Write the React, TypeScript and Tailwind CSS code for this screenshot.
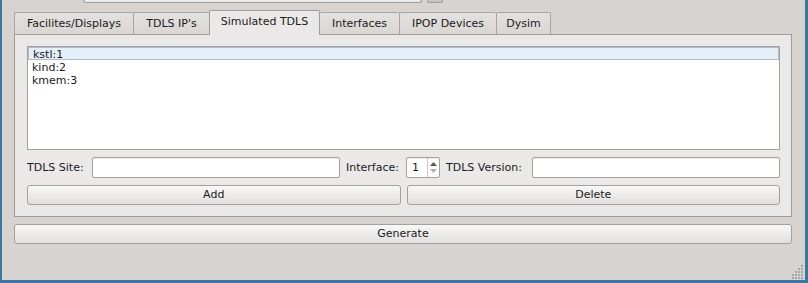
import clsx from "clsx";

const tabs = [
  { label: "Facilites/Displays", w: "w-[119px]" },
  { label: "TDLS IP's", w: "w-[76px]" },
  { label: "Simulated TDLS", w: "w-[111px]" },
  { label: "Interfaces", w: "w-[79px]" },
  { label: "IPOP Devices", w: "w-[97px]" },
  { label: "Dysim", w: "w-[55px]" },
];

const selected = 2;
const rows = ["kstl:1", "kind:2", "kmem:3"];

const TabBar = () => (
  <div className="flex items-end h-[24px] ml-[12px]">
    {tabs.map((t, i) => {
      const isSel = i === selected;
      return (
        <div
          key={t.label}
          className={clsx(
            "flex items-center justify-center rounded-t-[2px] border-[#a8a5a2] border-t whitespace-nowrap",
            t.w,
            isSel
              ? "relative z-10 h-[25px] -mb-px pb-[2px] border-l border-r bg-[#ebe9e8] border-[#a09d9a]"
              : "h-[22px] pt-[2px] bg-linear-to-b from-[#e3e1df] to-[#d9d6d4]",
            !isSel && i !== selected + 1 && "border-l",
            i === tabs.length - 1 && "border-r"
          )}
        >
          {t.label}
        </div>
      );
    })}
  </div>
);

const Field = ({ className }: { className?: string }) => (
  <div
    className={clsx(
      "h-[21px] bg-white border border-[#a3a09d] rounded-[2px] shadow-[inset_0_1px_1px_rgba(0,0,0,0.08)]",
      className
    )}
  />
);

const Button = ({ label, className }: { label: string; className?: string }) => (
  <div
    className={clsx(
      "h-[20px] pt-px flex items-center justify-center border border-[#a3a09d] rounded-[3px] bg-linear-to-b from-[#f8f8f7] to-[#e2e0de]",
      className
    )}
  >
    {label}
  </div>
);

const SpinBox = () => (
  <div className="w-[34px] h-[21px] flex bg-white border border-[#a3a09d] rounded-[2px] shadow-[inset_0_1px_1px_rgba(0,0,0,0.08)]">
    <div className="flex-1 flex items-center pl-[5px] pt-px">1</div>
    <div className="w-[12px] border-l border-[#c9c6c3] flex flex-col items-center justify-center gap-[3px]">
      <svg width="7" height="4" viewBox="0 0 7 4">
        <polygon points="0,4 3.5,0 7,4" fill="#5a5856" />
      </svg>
      <svg width="7" height="4" viewBox="0 0 7 4">
        <polygon points="0,0 7,0 3.5,4" fill="#b3b0ad" />
      </svg>
    </div>
  </div>
);

const SizeGrip = () => (
  <svg width="12" height="14" viewBox="0 0 12 14" className="self-end mr-[1px] mb-[1px]">
    {[
      [9, 0],
      [6, 3], [9, 3],
      [3, 6], [6, 6], [9, 6],
      [0, 9], [3, 9], [6, 9], [9, 9],
      [0, 12], [3, 12], [6, 12], [9, 12],
    ].map(([x, y]) => (
      <rect key={`${x}-${y}`} x={x} y={y} width="2" height="2" fill="#a9a6a3" />
    ))}
  </svg>
);

export default function App() {
  return (
    <div className="w-[808px] h-[283px] flex flex-col bg-[#d6d3d0] border-l-2 border-r-[3px] border-b-[3px] border-[#3a77a2] text-[11px] text-[#1a1a1a] font-['DejaVu_Sans',sans-serif] overflow-hidden">
      {/* partly visible combo above the tabs */}
      <div className="flex h-[3px]">
        <div className="ml-[81px] w-[339px] border-l border-r border-b border-[#a09d9a] rounded-b-[3px] bg-[#ebeae9]" />
        <div className="ml-[5px] w-[16px] border-l border-r border-b border-[#a09d9a] rounded-b-[2px] bg-[#c8c5c2]" />
      </div>

      <div className="pl-[12px] pr-[13px] mt-[7px] flex flex-col">
        <div className="-ml-[12px]">
          <TabBar />
        </div>

        <div className="h-[183px] border border-[#9e9b98] bg-[#ebe9e8] pl-3 pr-[11px] pt-[11px] flex flex-col">
          <div className="h-[104px] bg-white border border-[#a3a09d] flex flex-col">
            {rows.map((r, i) => (
              <div
                key={r}
                className={clsx(
                  "h-[13px] flex items-center pl-[4px] pt-px leading-none",
                  i === 0 && "bg-[#e4eff9] border border-[#aebccb] pl-[3px]"
                )}
              >
                {r}
              </div>
            ))}
          </div>

          <div className="mt-[7px] flex items-center gap-[6px]">
            <div className="w-[59px] pt-px whitespace-nowrap">TDLS Site:</div>
            <Field className="w-[248px]" />
            <div className="w-[54px] pt-px whitespace-nowrap">Interface:</div>
            <SpinBox />
            <div className="w-[80px] pt-px whitespace-nowrap">TDLS Version:</div>
            <Field className="flex-1" />
          </div>

          <div className="mt-[7px] grid grid-cols-2 gap-[6px]">
            <Button label="Add" />
            <Button label="Delete" />
          </div>
        </div>

        <Button label="Generate" className="mt-[7px]" />
      </div>

      <div className="mt-auto flex justify-end">
        <SizeGrip />
      </div>
    </div>
  );
}
